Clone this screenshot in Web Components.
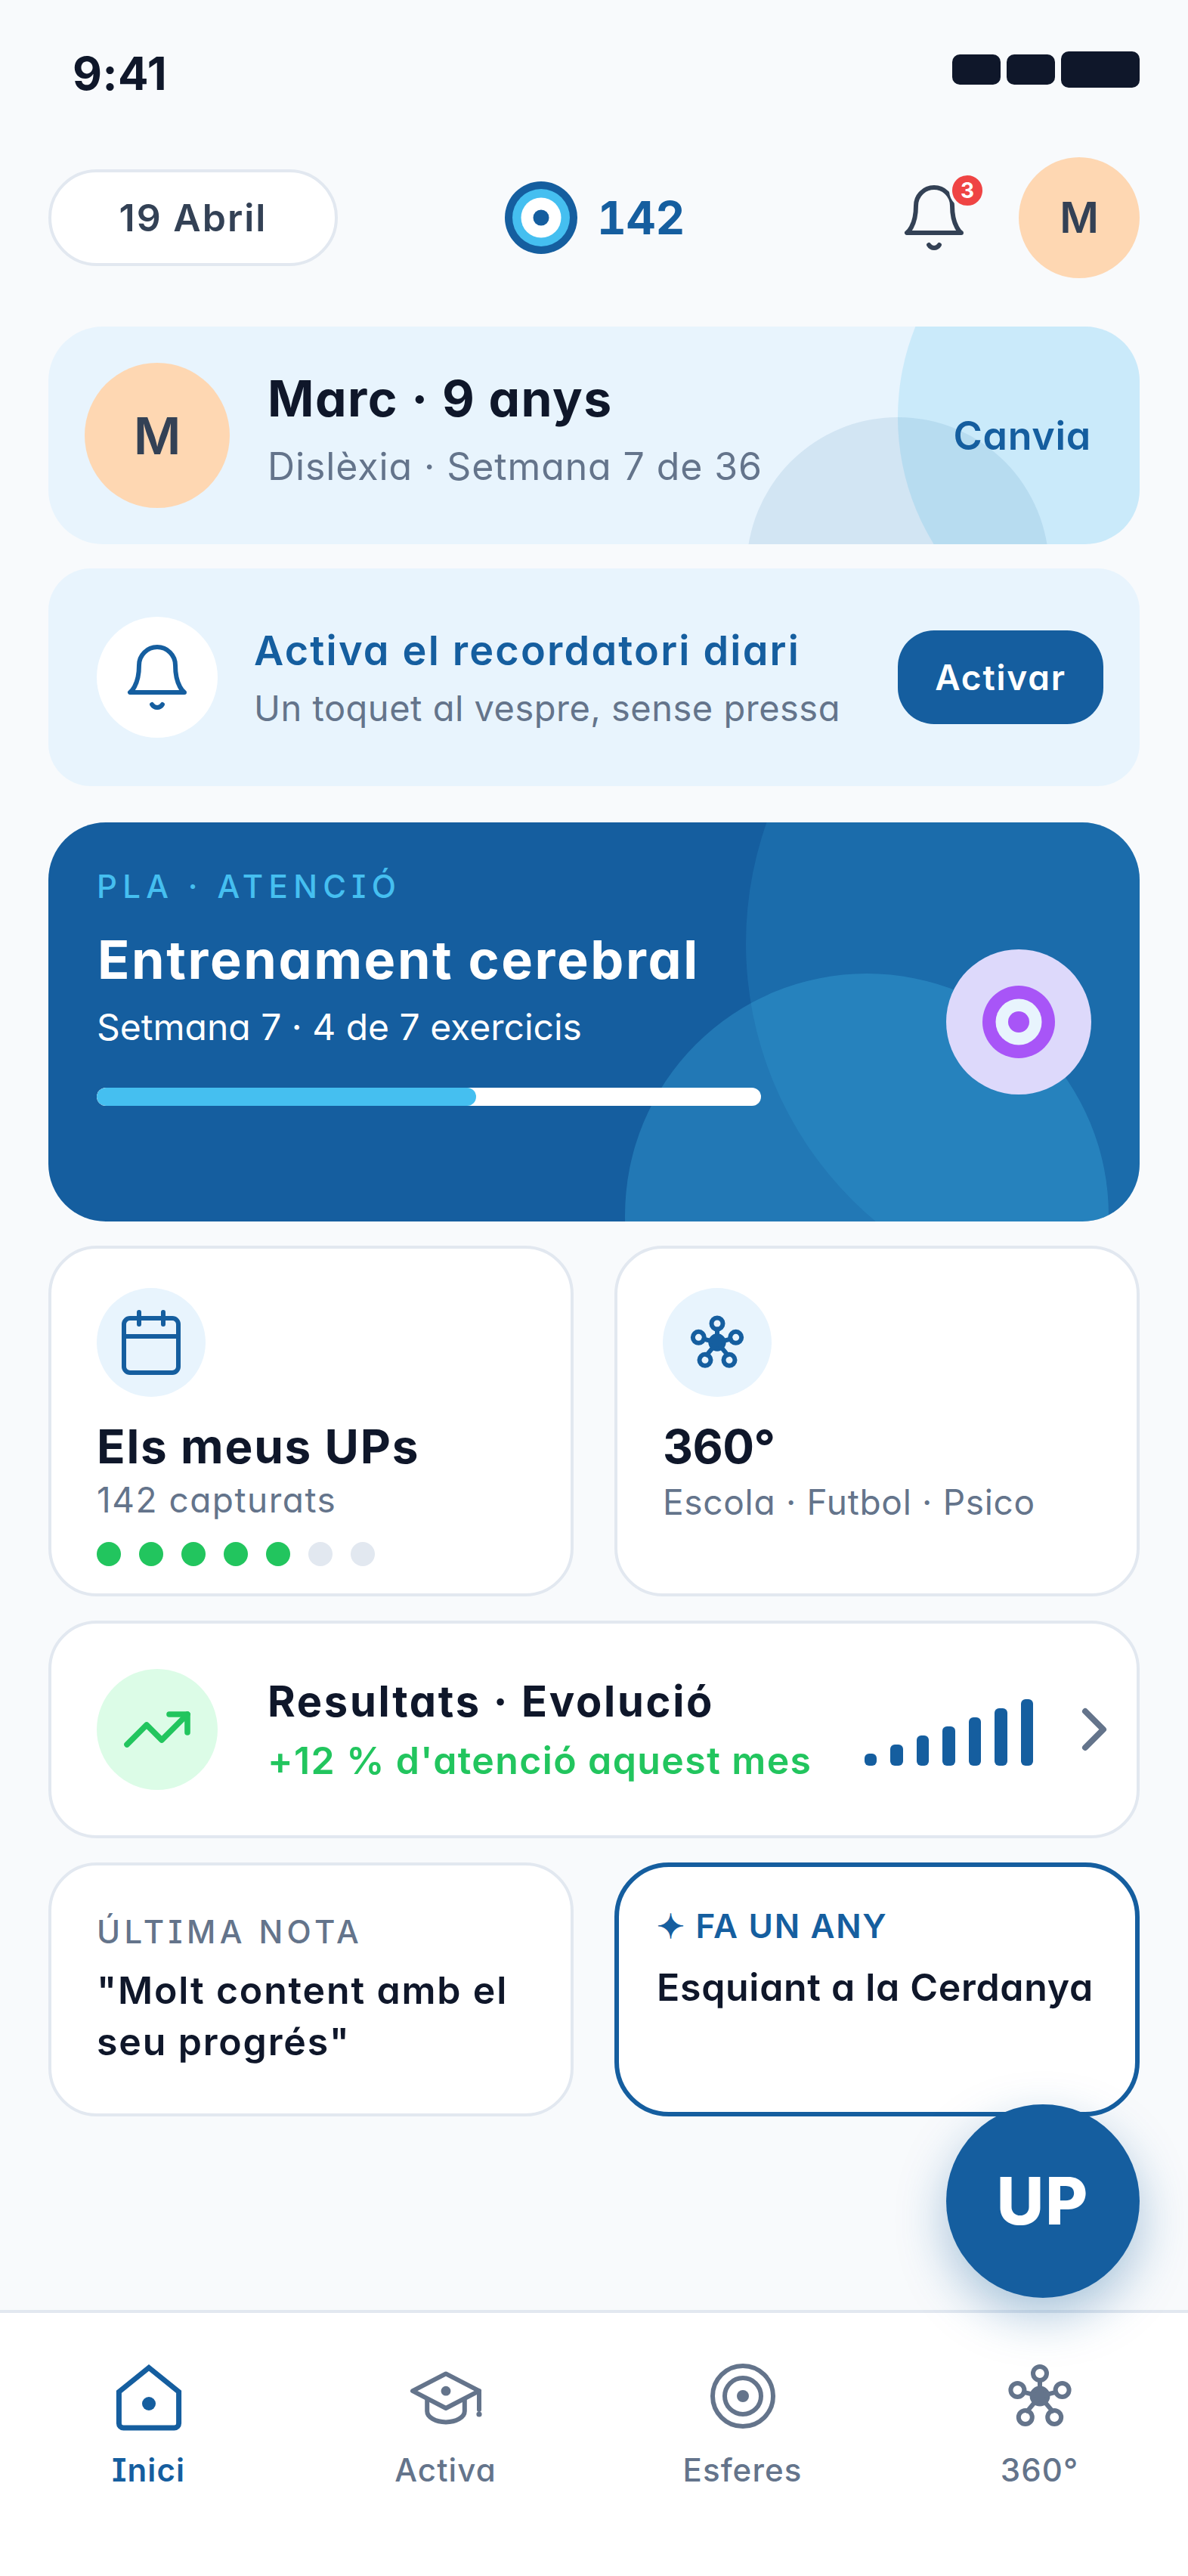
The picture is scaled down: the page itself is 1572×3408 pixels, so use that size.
<!DOCTYPE html>
<html lang="ca">
<head>
<meta charset="utf-8">
<title>UP</title>
<style>
  html, body { margin: 0; padding: 0; background: #f8fafc; }
  body {
    font-family: Inter, "Liberation Sans", sans-serif;
    font-feature-settings: "cv11", "cv08";
    color: #0f172a;
  }
</style>
</head>
<body>
<app-screen>
  <status-bar></status-bar>
  <top-bar date="19 Abril" points="142" initial="M" alerts="3"></top-bar>
  <child-card name="Marc · 9 anys" detail="Dislèxia · Setmana 7 de 36" initial="M" action="Canvia"></child-card>
  <reminder-card heading="Activa el recordatori diari" detail="Un toquet al vespre, sense pressa" action="Activar"></reminder-card>
  <plan-card label="PLA · ATENCIÓ" heading="Entrenament cerebral" detail="Setmana 7 · 4 de 7 exercicis"></plan-card>
  <two-cols>
    <info-tile icon="calendar" heading="Els meus UPs" detail="142 capturats" dots="5"></info-tile>
    <info-tile icon="network" heading="360°" detail="Escola · Futbol · Psico"></info-tile>
  </two-cols>
  <results-card heading="Resultats · Evolució" detail="+12 % d'atenció aquest mes"></results-card>
  <two-cols>
    <note-card label="ÚLTIMA NOTA">"Molt content amb el seu progrés"</note-card>
    <note-card accent label="✦ FA UN ANY">Esquiant a la Cerdanya</note-card>
  </two-cols>
  <up-fab slot="overlay">UP</up-fab>
  <bottom-nav slot="nav">
    <nav-item active icon="home">Inici</nav-item>
    <nav-item icon="cap">Activa</nav-item>
    <nav-item icon="target">Esferes</nav-item>
    <nav-item icon="network">360°</nav-item>
  </bottom-nav>
</app-screen>

<script>
const BLUE = '#155e9f';

const ICONS = {
  bell: `<path d="M18 8A6 6 0 0 0 6 8c0 7-3 9-3 9h18s-3-2-3-9"/><path d="M13.73 21a2 2 0 0 1-3.46 0"/>`,
  calendar: `<rect x="3" y="4" width="18" height="18" rx="2"/><path d="M16 2v4M8 2v4M3 10h18"/>`,
  network: `<circle cx="12" cy="12" r="2.6" fill="currentColor"/><path d="M12 6.75V12M6.7 10.7 12 12M17.3 10.7 12 12M7.9 16.9 12 12M16.1 16.9 12 12"/><circle cx="12" cy="4.5" r="2.25"/><circle cx="4.6" cy="10" r="2.25"/><circle cx="19.4" cy="10" r="2.25"/><circle cx="7.2" cy="19" r="2.25"/><circle cx="16.8" cy="19" r="2.25"/>`,
  trend: `<path d="M22 7l-8.5 8.5-5-5L2 17"/><path d="M16 7h6v6"/>`,
  chevron: `<path d="m9 18 6-6-6-6"/>`,
  home: `<path d="M2.1 10.6 12 2.6l9.9 8V21a1.5 1.5 0 0 1-1.5 1.5H3.6A1.5 1.5 0 0 1 2.1 21z" stroke-linejoin="miter"/><circle cx="12" cy="14.5" r="2.25" fill="currentColor" stroke="none"/>`,
  cap: `<path d="M12 4.6 23 10.3 12 16 1 10.3z"/><circle cx="12" cy="10.3" r="1.6" fill="currentColor" stroke="none"/><path d="M5.8 13.2V17c0 2 2.8 3.6 6.2 3.6s6.2-1.6 6.2-3.6v-3.8"/><path d="M23 10.3v6.2"/><circle cx="23" cy="18" r=".9" fill="currentColor" stroke="none"/>`,
  target: `<circle cx="12" cy="12" r="10"/><circle cx="12" cy="12" r="6"/><circle cx="12" cy="12" r="2" fill="currentColor" stroke="none"/>`
};

// every element builds its shadow root from a css + html pair
class UiElement extends HTMLElement {
  constructor() {
    super();
    this.attachShadow({ mode: 'open' });
  }
  connectedCallback() {
    this.shadowRoot.innerHTML = `<style>${this.css()}</style>${this.html()}`;
  }
  css() { return ''; }
  html() { return '<slot></slot>'; }
  attr(name) {
    return this.getAttribute(name) || '';
  }
}

class AppIcon extends UiElement {
  css() {
    return `:host { display: block; width: var(--icon-size, 96px); height: var(--icon-size, 96px); flex: none; }
      svg { display: block; width: 100%; height: 100%; overflow: visible; }`;
  }
  html() {
    const stroke = this.attr('stroke') || '1.5';
    return `<svg viewBox="0 0 24 24" fill="none" stroke="currentColor" stroke-width="${stroke}" stroke-linecap="round" stroke-linejoin="round">${ICONS[this.attr('name')]}</svg>`;
  }
}

class AppScreen extends UiElement {
  css() {
    return `:host { display: block; position: relative; width: 1572px; height: 3408px; overflow: hidden; background: #f8fafc; }
      .page { display: flex; flex-direction: column; height: 100%; }
      main { flex: 1; display: flex; flex-direction: column; gap: 32px; padding: 0 64px; }
      ::slotted(reminder-card) { margin-bottom: 16px; }`;
  }
  html() {
    return `<div class="page">
      <slot name="head"></slot>
      <main><slot></slot></main>
      <slot name="nav"></slot>
    </div><slot name="overlay"></slot>`;
  }
  connectedCallback() {
    super.connectedCallback();
    this.querySelector('status-bar').slot = 'head';
    this.querySelector('top-bar').slot = 'head';
  }
}

class StatusBar extends UiElement {
  css() {
    return `:host { display: flex; justify-content: space-between; height: 208px; box-sizing: border-box; padding: 61px 64px 0 96px; }
      .time { font-size: 60px; line-height: 72px; font-weight: 700; color: #0f172a; letter-spacing: .5px; }
      .icons { display: flex; gap: 8px; align-items: center; height: 48px; margin-top: 7px; }
      i { display: block; width: 64px; height: 40px; border-radius: 10px; background: #0f172a; }
      i:last-child { width: 104px; height: 48px; }`;
  }
  html() {
    return `<div class="time">9:41</div><div class="icons"><i></i><i></i><i></i></div>`;
  }
}

class TopBar extends UiElement {
  css() {
    return `:host { display: flex; align-items: center; height: 160px; padding: 0 64px; margin-bottom: 64px; }
      .date { box-sizing: border-box; width: 383px; height: 128px; border: 4px solid #e2e8f0; border-radius: 64px; background: #fff;
        display: flex; align-items: center; justify-content: center; font-size: 50px; font-weight: 600; color: #334155; letter-spacing: 2px; }
      .points { display: flex; align-items: center; gap: 26px; margin-left: 221px; font-size: 60px; font-weight: 700; color: ${BLUE}; font-feature-settings: "cv11", "cv08", "tnum"; letter-spacing: 0; }
      .points svg { display: block; width: 96px; height: 96px; }
      .right { display: flex; align-items: center; gap: 64px; margin-left: auto; }
      .bell { position: relative; color: #334155; }
      .badge { position: absolute; left: 68px; top: -12px; box-sizing: border-box; width: 48px; height: 48px; border-radius: 50%;
        border: 4px solid #f8fafc; background: #ef4444; color: #fff; font-size: 28px; font-weight: 700;
        display: flex; align-items: center; justify-content: center; }
      .avatar { width: 160px; height: 160px; border-radius: 50%; background: #fed7b2; display: flex; align-items: center; justify-content: center;
        font-size: 56px; font-weight: 600; color: #334155; }`;
  }
  html() {
    return `<div class="date">${this.attr('date')}</div>
      <div class="points"><svg viewBox="0 0 96 96"><circle cx="48" cy="48" r="48" fill="${BLUE}"/><circle cx="48" cy="48" r="38" fill="#45bff0"/><circle cx="48" cy="48" r="26.5" fill="#fff"/><circle cx="48" cy="48" r="10.5" fill="${BLUE}"/></svg><span>${this.attr('points')}</span></div>
      <div class="right">
        <div class="bell"><app-icon name="bell"></app-icon><span class="badge">${this.attr('alerts')}</span></div>
        <div class="avatar">${this.attr('initial')}</div>
      </div>`;
  }
}

class ChildCard extends UiElement {
  css() {
    return `:host { display: flex; align-items: center; position: relative; overflow: hidden; height: 288px; box-sizing: border-box;
        padding: 0 64px 0 48px; gap: 50px; border-radius: 72px; background: #e8f4fd; }
      .blob { position: absolute; border-radius: 50%; }
      .b1 { width: 640px; height: 640px; top: -200px; right: -320px; background: rgba(69,191,240,.18); }
      .b2 { width: 400px; height: 400px; top: 120px; right: 120px; background: rgba(21,94,159,.1); }
      .avatar { position: relative; width: 192px; height: 192px; border-radius: 50%; background: #fed7b2; display: flex; align-items: center; justify-content: center;
        font-size: 68px; font-weight: 600; color: #334155; flex: none; }
      .text { position: relative; flex: 1; padding-bottom: 18px; }
      h2 { margin: 0 0 16px; font-size: 66px; line-height: 84px; font-weight: 700; color: #0f172a; letter-spacing: 1.5px; }
      p { margin: 0; font-size: 50px; line-height: 64px; color: #64748b; letter-spacing: .9px; }
      .action { position: relative; font-size: 52px; font-weight: 600; color: ${BLUE}; letter-spacing: .7px; }`;
  }
  html() {
    return `<i class="blob b1"></i><i class="blob b2"></i>
      <div class="avatar">${this.attr('initial')}</div>
      <div class="text"><h2>${this.attr('name')}</h2><p>${this.attr('detail')}</p></div>
      <span class="action">${this.attr('action')}</span>`;
  }
}

class ReminderCard extends UiElement {
  css() {
    return `:host { display: flex; align-items: center; height: 288px; box-sizing: border-box; padding: 0 48px 0 64px; gap: 48px;
        border-radius: 56px; background: #e8f4fd; }
      .round { width: 160px; height: 160px; border-radius: 50%; background: #fff; color: ${BLUE}; display: flex; align-items: center; justify-content: center; flex: none; }
      .text { flex: 1; }
      h3 { margin: 0 0 11px; font-size: 54px; line-height: 68px; font-weight: 600; color: ${BLUE}; letter-spacing: 2.2px; }
      p { margin: 0; font-size: 47px; line-height: 60px; color: #64748b; letter-spacing: .5px; position: relative; top: 1px; }
      .btn { width: 272px; height: 124px; border-radius: 48px; background: ${BLUE}; color: #fff; display: flex; align-items: center; justify-content: center;
        font-size: 46px; font-weight: 600; flex: none; letter-spacing: 1.8px; }`;
  }
  html() {
    return `<div class="round"><app-icon name="bell"></app-icon></div>
      <div class="text"><h3>${this.attr('heading')}</h3><p>${this.attr('detail')}</p></div>
      <div class="btn">${this.attr('action')}</div>`;
  }
}

class PlanCard extends UiElement {
  css() {
    return `:host { display: block; position: relative; overflow: hidden; height: 528px; box-sizing: border-box; padding: 59px 64px 0;
        border-radius: 76px; background: ${BLUE}; color: #fff; }
      .blob { position: absolute; border-radius: 50%; }
      .b1 { width: 960px; height: 960px; top: -320px; right: -439px; background: rgba(69,191,240,.15); }
      .b2 { width: 640px; height: 640px; top: 200px; right: 41px; background: rgba(69,191,240,.27); }
      .label, h2, p, .bar { position: relative; }
      .label { font-size: 42px; line-height: 52px; font-weight: 500; letter-spacing: 7.3px; color: #45bff0; }
      h2 { margin: 27px 0 15px 1px; font-size: 70px; line-height: 88px; font-weight: 700; letter-spacing: 2.6px; }
      p { margin: 0 0 50px; font-size: 48px; line-height: 60px; }
      .bar { width: 879px; height: 24px; border-radius: 12px; background: #fff; overflow: hidden; }
      .bar i { display: block; width: 502px; height: 100%; border-radius: 12px; background: #45bff0; }
      .badge { position: absolute; top: 168px; right: 64px; width: 192px; height: 192px; border-radius: 50%; background: #ddd9fb;
        display: flex; align-items: center; justify-content: center; }
      .badge svg { display: block; width: 96px; height: 96px; }`;
  }
  html() {
    return `<i class="blob b1"></i><i class="blob b2"></i>
      <div class="label">${this.attr('label')}</div>
      <h2>${this.attr('heading')}</h2>
      <p>${this.attr('detail')}</p>
      <div class="bar"><i></i></div>
      <div class="badge"><svg viewBox="0 0 96 96"><circle cx="48" cy="48" r="48" fill="#a855f7"/><circle cx="48" cy="48" r="30.5" fill="#e8f4fd"/><circle cx="48" cy="48" r="14" fill="#a855f7"/></svg></div>`;
  }
}

class TwoCols extends UiElement {
  css() {
    return `:host { display: grid; grid-template-columns: 695px 695px; gap: 54px; }`;
  }
}

class InfoTile extends UiElement {
  css() {
    const counted = this.hasAttribute('dots');
    return `:host { display: block; box-sizing: border-box; height: 464px; padding: 52px 60px 0; border: 4px solid #e2e8f0; border-radius: 64px; background: #fff; }
      .round { width: 144px; height: 144px; border-radius: 50%; background: #e8f4fd; color: ${BLUE}; display: flex; align-items: center; justify-content: center; }
      app-icon[name="network"] { --icon-size: 80px; }
      h3 { margin: 28px 0 ${counted ? 4 : 7}px; font-size: 62px; line-height: 76px; font-weight: 700; color: #0f172a; letter-spacing: ${counted ? 1.8 : -.5}px; }
      p { margin: 0; font-size: 46px; line-height: 56px; color: #64748b; letter-spacing: ${counted ? 1.5 : .7}px; }
      .dots { display: flex; gap: 24px; margin-top: 28px; }
      .dots i { width: 32px; height: 32px; border-radius: 50%; background: #e2e8f0; }
      .dots i.on { background: #22c55e; }`;
  }
  html() {
    let dots = '';
    if (this.hasAttribute('dots')) {
      const on = Number(this.attr('dots'));
      dots = '<div class="dots">' + Array.from({ length: 7 }, (_, i) => `<i class="${i < on ? 'on' : ''}"></i>`).join('') + '</div>';
    }
    const icon = this.attr('icon');
    return `<div class="round"><app-icon name="${icon}" stroke="${icon === 'network' ? 1.8 : 1.5}"></app-icon></div>
      <h3>${this.attr('heading')}</h3><p>${this.attr('detail')}</p>${dots}`;
  }
}

class ResultsCard extends UiElement {
  css() {
    return `:host { display: flex; align-items: center; box-sizing: border-box; height: 288px; padding: 0 8px 0 60px; gap: 66px;
        border: 4px solid #e2e8f0; border-radius: 64px; background: #fff; }
      .round { width: 160px; height: 160px; border-radius: 50%; background: #dcfce7; color: #22c55e; display: flex; align-items: center; justify-content: center; flex: none; }
      .text { flex: 1; }
      h3 { margin: 0 0 14px; font-size: 56px; line-height: 68px; font-weight: 700; color: #0f172a; letter-spacing: 2.7px; }
      p { margin: 0; font-size: 50px; line-height: 60px; font-weight: 600; color: #22c55e; letter-spacing: 1.4px; white-space: nowrap; }
      .bars { display: flex; align-items: flex-end; gap: 18px; height: 88px; margin: 8px -33px 0 0; flex: none; }
      .bars i { width: 16.5px; border-radius: 6px; background: ${BLUE}; }
      .chev { color: #64748b; }`;
  }
  html() {
    const bars = [16, 28, 40, 52, 64, 76, 88].map(h => `<i style="height:${h}px"></i>`).join('');
    return `<div class="round"><app-icon name="trend" stroke="1.9"></app-icon></div>
      <div class="text"><h3>${this.attr('heading')}</h3><p>${this.attr('detail')}</p></div>
      <div class="bars">${bars}</div>
      <app-icon class="chev" name="chevron" stroke="2"></app-icon>`;
  }
}

class NoteCard extends UiElement {
  css() {
    const accent = this.hasAttribute('accent');
    return `:host { display: block; box-sizing: border-box; height: 336px; background: #fff;
        border: ${accent ? 6 : 4}px solid ${accent ? BLUE : '#e2e8f0'}; border-radius: ${accent ? 72 : 64}px;
        padding: ${accent ? '52px 0 0 50px' : '62px 40px 0 60px'}; }
      .label { font-size: ${accent ? 44 : 42}px; line-height: 52px; font-weight: ${accent ? 600 : 500}; letter-spacing: ${accent ? 1.7 : 5.4}px; color: ${accent ? BLUE : '#64748b'}; }
      .body { margin-top: ${accent ? 21 : 17}px; font-size: 50px; line-height: 68px; font-weight: 600; color: #0f172a; letter-spacing: ${accent ? .7 : 1.85}px; }`;
  }
  html() {
    return `<div class="label">${this.attr('label')}</div><div class="body"><slot></slot></div>`;
  }
}

class UpFab extends UiElement {
  css() {
    return `:host { position: absolute; top: 2784px; left: 1252px; width: 256px; height: 256px; border-radius: 50%; background: ${BLUE}; color: #fff;
        display: flex; align-items: center; justify-content: center; font-size: 86px; font-weight: 800; letter-spacing: 2px; box-shadow: 0 24px 64px rgba(21,94,159,.35); z-index: 2; }`;
  }
}

class BottomNav extends UiElement {
  css() {
    return `:host { display: grid; grid-template-columns: repeat(4, 393px); box-sizing: border-box; height: 352px; padding-top: 62px; border-top: 4px solid #e2e8f0; background: #fff; }`;
  }
}

class NavItem extends UiElement {
  css() {
    const active = this.hasAttribute('active');
    return `:host { display: flex; flex-direction: column; align-items: center; gap: 24px; color: ${active ? BLUE : '#64748b'}; }
      span { font-size: 42px; line-height: 52px; font-weight: ${active ? 600 : 500}; letter-spacing: 1.1px; }`;
  }
  html() {
    return `<app-icon name="${this.attr('icon')}" stroke="${this.attr('icon') === 'home' ? 1.75 : 1.5}"></app-icon><span><slot></slot></span>`;
  }
}

customElements.define('app-icon', AppIcon);
customElements.define('app-screen', AppScreen);
customElements.define('status-bar', StatusBar);
customElements.define('top-bar', TopBar);
customElements.define('child-card', ChildCard);
customElements.define('reminder-card', ReminderCard);
customElements.define('plan-card', PlanCard);
customElements.define('two-cols', TwoCols);
customElements.define('info-tile', InfoTile);
customElements.define('results-card', ResultsCard);
customElements.define('note-card', NoteCard);
customElements.define('up-fab', UpFab);
customElements.define('bottom-nav', BottomNav);
customElements.define('nav-item', NavItem);
</script>
</body>
</html>
